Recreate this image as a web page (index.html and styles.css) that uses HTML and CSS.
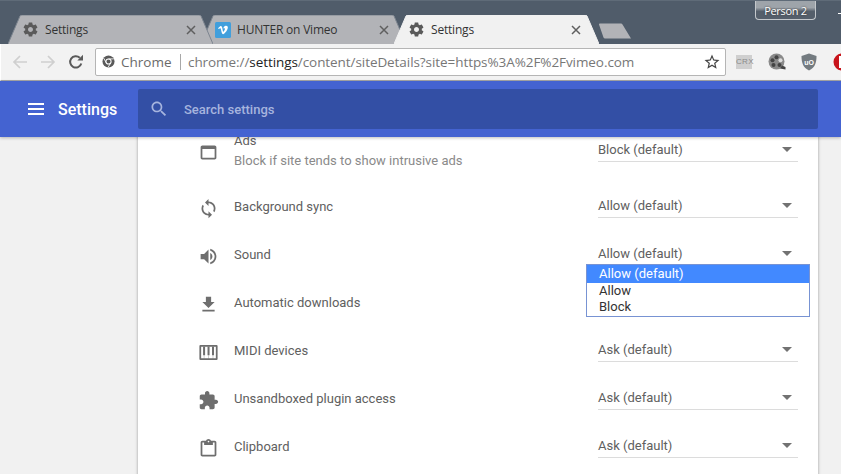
FILE: index.html
```html
<!DOCTYPE html>
<html lang="en">
<head>
<meta charset="utf-8">
<title>Settings</title>
<link rel="stylesheet" href="styles.css">
</head>
<body>
<svg class="defs" width="0" height="0" aria-hidden="true">
  <symbol id="i-gear" viewBox="0 0 24 24"><path d="M19.43 12.98c.04-.32.07-.64.07-.98s-.03-.66-.07-.98l2.11-1.65c.19-.15.24-.42.12-.64l-2-3.46c-.12-.22-.39-.3-.61-.22l-2.49 1c-.52-.4-1.08-.73-1.69-.98l-.38-2.65C14.46 2.18 14.25 2 14 2h-4c-.25 0-.46.18-.49.42l-.38 2.65c-.61.25-1.17.59-1.69.98l-2.49-1c-.23-.09-.49 0-.61.22l-2 3.46c-.13.22-.07.49.12.64l2.11 1.65c-.04.32-.07.65-.07.98s.03.66.07.98l-2.11 1.65c-.19.15-.24.42-.12.64l2 3.46c.12.22.39.3.61.22l2.49-1c.52.4 1.08.73 1.69.98l.38 2.65c.03.24.24.42.49.42h4c.25 0 .46-.18.49-.42l.38-2.65c.61-.25 1.17-.59 1.69-.98l2.49 1c.23.09.49 0 .61-.22l2-3.46c.12-.22.07-.49-.12-.64l-2.11-1.65zM12 15.5c-1.93 0-3.5-1.57-3.5-3.5s1.57-3.5 3.5-3.5 3.5 1.57 3.5 3.5-1.57 3.5-3.5 3.5z"/></symbol>
  <symbol id="i-close" viewBox="0 0 10 10"><path d="M1 1l8 8M9 1l-8 8" fill="none" stroke="currentColor" stroke-width="1.5"/></symbol>
  <symbol id="i-ads" viewBox="0 0 24 24"><path d="M19 4H5c-1.11 0-2 .9-2 2v12c0 1.1.89 2 2 2h14c1.1 0 2-.9 2-2V6c0-1.1-.89-2-2-2zm0 14H5V8h14v10z"/></symbol>
  <symbol id="i-sync" viewBox="0 0 24 24"><path d="M12 4V1L8 5l4 4V6c3.31 0 6 2.69 6 6 0 1.01-.25 1.97-.7 2.8l1.46 1.46C19.54 15.03 20 13.57 20 12c0-4.42-3.58-8-8-8zm0 14c-3.31 0-6-2.69-6-6 0-1.01.25-1.97.7-2.8L5.24 7.74C4.46 8.97 4 10.43 4 12c0 4.42 3.58 8 8 8v3l4-4-4-4v3z"/></symbol>
  <symbol id="i-sound" viewBox="0 0 24 24"><path d="M3 9v6h4l5 5V4L7 9H3zm13.5 3c0-1.77-1.02-3.29-2.5-4.03v8.05c1.48-.73 2.5-2.25 2.5-4.02zM14 3.23v2.06c2.89.86 5 3.54 5 6.71s-2.11 5.85-5 6.71v2.06c4.01-.91 7-4.49 7-8.77s-2.99-7.86-7-8.77z"/></symbol>
  <symbol id="i-download" viewBox="0 0 24 24"><path d="M19 9h-4V3H9v6H5l7 7 7-7zM5 18v2h14v-2H5z"/></symbol>
  <symbol id="i-midi" viewBox="0 0 24 24"><path d="M2.800 3.400h18.400a1.200 1.200 0 0 1 1.200 1.200v14.800a1.200 1.200 0 0 1-1.200 1.200H2.800a1.200 1.200 0 0 1-1.200-1.200V4.600a1.200 1.200 0 0 1 1.200-1.200zm.8 2v13.200h16.800V5.400z" fill-rule="evenodd"/><path d="M5.800 5h2.300v10H5.800zM10.900 5h2.300v10h-2.300zM16 5h2.300v10H16z"/><path d="M6.600 15h.7v4h-.7zM11.700 15h.7v4h-.7zM16.800 15h.7v4h-.7z" opacity=".5"/></symbol>
  <symbol id="i-plugin" viewBox="0 0 24 24"><path d="M20.5 11H19V7c0-1.1-.9-2-2-2h-4V3.500C13 2.120 11.880 1 10.500 1S8 2.120 8 3.500V5H4c-1.100 0-1.990.9-1.990 2v3.800H3.500c1.490 0 2.700 1.210 2.700 2.700s-1.210 2.700-2.700 2.700H2V20c0 1.100.9 2 2 2h3.800v-1.500c0-1.490 1.210-2.700 2.700-2.700 1.490 0 2.700 1.210 2.700 2.700V22H17c1.100 0 2-.9 2-2v-4h1.500c1.380 0 2.500-1.120 2.500-2.500S21.880 11 20.500 11z"/></symbol>
  <symbol id="i-clip" viewBox="0 0 24 24"><path d="M19 3h-4.180C14.400 1.840 13.300 1 12 1c-1.300 0-2.400.84-2.820 2H5c-1.100 0-2 .9-2 2v14c0 1.100.9 2 2 2h14c1.100 0 2-.9 2-2V5c0-1.100-.9-2-2-2zm-7 0c.55 0 1 .45 1 1s-.45 1-1 1-1-.45-1-1 .45-1 1-1zm7 16H5V5h2v3h10V5h2v14z"/></symbol>
</svg>

<div class="strip">
  <div class="tabs">
    <div class="tab tab-a">
      <svg class="tab-shape" viewBox="0 0 205 29" preserveAspectRatio="none"><path d="M0 29L12 1Q12.500 0 14 0H191Q192.500 0 193 1L205 29"/></svg>
      <svg class="fav fav-gear"><use href="#i-gear"/></svg>
      <span class="tab-title">Settings</span>
      <svg class="tab-x"><use href="#i-close"/></svg>
    </div>
    <div class="tab tab-b">
      <svg class="tab-shape" viewBox="0 0 205 29" preserveAspectRatio="none"><path d="M0 29L12 1Q12.500 0 14 0H191Q192.500 0 193 1L205 29"/></svg>
      <svg class="fav" viewBox="0 0 16 16"><rect width="16" height="16" rx="1.500" fill="#419fdc"/><path d="M3 6.200l.8.9c.9-.7 1.400-1 1.700-.8.5.2.9 3.900 1.600 5.200.5.900 1.300.9 2 .3 1.500-1.200 3.400-3.600 3.700-5.700.2-1.700-.8-2.500-2-2.300-1.100.2-2.100 1-2.500 2.700 1.200-.6 1.900-.3 1.500 1-.3 1-1.200 2.300-1.500 2.300-.5 0-.7-3.300-1.300-4.800-.4-1-1.100-1.200-1.800-.8-.8.500-1.400 1.200-2.200 2z" fill="#fff"/></svg>
      <span class="tab-title">HUNTER on Vimeo</span>
      <svg class="tab-x"><use href="#i-close"/></svg>
    </div>
    <div class="tab tab-c">
      <svg class="tab-shape" viewBox="0 0 205 29" preserveAspectRatio="none"><path d="M0 29L12 1Q12.500 0 14 0H191Q192.500 0 193 1L205 29"/></svg>
      <svg class="fav fav-gear"><use href="#i-gear"/></svg>
      <span class="tab-title">Settings</span>
      <svg class="tab-x"><use href="#i-close"/></svg>
    </div>
  </div>
  <svg class="newtab" viewBox="0 0 34 16"><path d="M1 1.500Q.8.500 2 .500H23Q24 .500 24.500 1.500L33 15.500H7Q6 15.500 5.500 14.500z"/></svg>
  <div class="person">Person 2</div>
  <div class="minimize"></div>
</div>

<div class="toolbar">
  <svg class="nav nav-off" viewBox="0 0 16 16"><path d="M15 8H2M8 2L2 8l6 6"/></svg>
  <svg class="nav nav-off nav-fwd" viewBox="0 0 16 16"><path d="M1 8h13M8 2l6 6-6 6"/></svg>
  <svg class="nav nav-reload" viewBox="0 0 16 16"><path d="M13.300 9.500A5.700 5.700 0 1 1 11.800 3.800"/><path class="nav-tip" d="M9.300 6.400H15V.7z"/></svg>
  <div class="omnibox">
    <svg class="chrome-mark" viewBox="0 0 14 14"><circle cx="7" cy="7" r="6.500" fill="#5a5a5a"/><circle cx="7" cy="7" r="2.800" fill="#5a5a5a" stroke="#fff" stroke-width="1.100"/><path d="M7 4.200H12.600M4.600 8.400L1.900 3.500M9.400 8.400L6.600 13.200" stroke="#fff" stroke-width=".9"/></svg>
    <span class="omni-name">Chrome</span>
    <span class="omni-sep"></span>
    <span class="omni-url">chrome://<b>settings</b>/content/siteDetails?site=https%3A%2F%2Fvimeo.com</span>
    <svg class="star" viewBox="0 0 24 24"><path d="M22 9.240l-7.190-.62L12 2 9.190 8.630 2 9.240l5.460 4.730L5.820 21 12 17.270 18.180 21l-1.630-7.030L22 9.240zM12 15.400l-3.760 2.270 1-4.280-3.320-2.880 4.380-.38L12 6.100l1.710 4.040 4.380.38-3.320 2.880 1 4.280L12 15.400z"/></svg>
  </div>
  <div class="ext ext-crx">CRX</div>
  <svg class="ext-icon" viewBox="0 0 18 18"><circle cx="8.500" cy="8.500" r="8" fill="#8a8a8a"/><circle cx="8.500" cy="4.300" r="2" fill="#444"/><circle cx="4.500" cy="7.300" r="2" fill="#444"/><circle cx="12.500" cy="7.300" r="2" fill="#ddd"/><circle cx="5.500" cy="12" r="2" fill="#444"/><circle cx="11.500" cy="12" r="2" fill="#444"/><path d="M12 15.500L17.500 16.500V14L14 12.500z" fill="#444"/></svg>
  <svg class="ext-icon ext-shield" viewBox="0 0 16 18"><path d="M8 .5L15.500 3c0 7 -1.500 11.500-7.500 14.500C2 14.500.5 10 .5 3z" fill="#747b80"/><text x="8" y="11.500" class="shield-text">uO</text></svg>
  <svg class="ext-icon ext-red" viewBox="0 0 18 18"><circle cx="9" cy="9" r="8.500" fill="#c8141b"/><rect x="6" y="3" width="5" height="12" fill="#fff"/><rect x="8" y="5" width="1.200" height="8" fill="#777"/></svg>
</div>

<header class="appbar">
  <div class="brand">
    <svg class="menu" viewBox="0 0 16 12"><path d="M0 0h16v2H0zM0 5h16v2H0zM0 10h16v2H0z"/></svg>
    <span class="brand-name">Settings</span>
  </div>
  <div class="search">
    <svg class="search-icon" viewBox="0 0 24 24"><path d="M15.500 14h-.79l-.28-.27C15.410 12.590 16 11.110 16 9.500 16 5.910 13.090 3 9.500 3S3 5.910 3 9.500 5.910 16 9.500 16c1.610 0 3.090-.59 4.230-1.570l.27.28v.79l5 4.990L20.490 19l-4.990-5zm-6 0C7.010 14 5 11.990 5 9.500S7.010 5 9.500 5 14 7.010 14 9.500 11.990 14 9.500 14z"/></svg>
    <span class="search-text">Search settings</span>
  </div>
</header>

<main class="page">
  <section class="card">
    <div class="row row-tall">
      <svg class="row-icon"><use href="#i-ads"/></svg>
      <div class="label"><div>Ads</div><div class="sub">Block if site tends to show intrusive ads</div></div>
      <div class="select"><span>Block (default)</span><i class="caret"></i></div>
    </div>
    <div class="row">
      <svg class="row-icon"><use href="#i-sync"/></svg>
      <div class="label">Background sync</div>
      <div class="select"><span>Allow (default)</span><i class="caret"></i></div>
    </div>
    <div class="row">
      <svg class="row-icon"><use href="#i-sound"/></svg>
      <div class="label">Sound</div>
      <div class="select select-open"><span>Allow (default)</span><i class="caret"></i>
        <ul class="popup">
          <li class="popup-on">Allow (default)</li>
          <li>Allow</li>
          <li>Block</li>
        </ul>
      </div>
    </div>
    <div class="row">
      <svg class="row-icon"><use href="#i-download"/></svg>
      <div class="label">Automatic downloads</div>
    </div>
    <div class="row">
      <svg class="row-icon"><use href="#i-midi"/></svg>
      <div class="label">MIDI devices</div>
      <div class="select"><span>Ask (default)</span><i class="caret"></i></div>
    </div>
    <div class="row">
      <svg class="row-icon"><use href="#i-plugin"/></svg>
      <div class="label">Unsandboxed plugin access</div>
      <div class="select"><span>Ask (default)</span><i class="caret"></i></div>
    </div>
    <div class="row">
      <svg class="row-icon"><use href="#i-clip"/></svg>
      <div class="label">Clipboard</div>
      <div class="select"><span>Ask (default)</span><i class="caret"></i></div>
    </div>
  </section>
</main>
</body>
</html>
```

FILE: styles.css
```css
* { box-sizing: border-box; }
html, body { margin: 0; height: 474px; overflow: hidden; }
body { width: 841px; background: #f1f1f1; font-family: Roboto, sans-serif; display: flex; flex-direction: column; }
.defs { position: absolute; }

/* tab strip */
.strip { height: 44px; flex: none; background: #505c6a; border-top: 1px solid #5f6b78; display: flex; padding-left: 8px; overflow: hidden; }
.tabs { display: flex; margin-top: 14px; height: 29px; }
.tab { position: relative; width: 205px; height: 29px; display: flex; align-items: center; padding: 0 17px 0 14px; }
.tab + .tab { margin-left: -12px; }
.tab-a { z-index: 3; }
.tab-b { z-index: 2; }
.tab-c { z-index: 4; padding-right: 18px; }
.tab-shape { position: absolute; left: 0; top: 0; width: 100%; height: 100%; fill: #b2b3b7; stroke: #7d8590; stroke-width: 1; }
.tab-c .tab-shape { fill: #f1f1f1; stroke: #f1f1f1; }
.fav { position: relative; width: 16px; height: 16px; flex: none; fill: #5a5a5a; }
.fav-gear { width: 17px; height: 17px; }
.tab-title { position: relative; flex: 1; margin-left: 6px; font: 12px "Open Sans", sans-serif; color: #333; white-space: nowrap; letter-spacing: -.2px; }
.tab-x { position: relative; width: 10px; height: 10px; flex: none; color: #5f5f5f; }
.newtab { width: 34px; height: 16px; margin: 22px 0 0 -1px; fill: #b2b3b7; flex: none; }
.person { width: 61px; height: 20px; margin: -1px 0 0 123px; flex: none; border: 1px solid #c4c8cc; border-top: 0; border-radius: 0 0 4px 4px; background: linear-gradient(#9ea4aa 0 40%, #555f6b 60%); color: #fff; font: 11px/21px "Open Sans", sans-serif; letter-spacing: -.3px; text-align: center; text-shadow: 0 0 2px #333; }
.minimize { width: 6px; height: 1px; margin: 12px 0 0 22px; background: #fff; flex: none; }

/* toolbar */
.toolbar { height: 37px; flex: none; background: #f2f2f2; border-bottom: 1px solid #a8a8a8; border-left: 1px solid #fff; display: flex; align-items: center; overflow: hidden; padding-bottom: 1px; }
.nav { width: 16px; height: 16px; flex: none; fill: none; stroke-width: 1.700; margin-left: 11px; }
.nav-off { stroke: #cfcfcf; }
.nav-fwd { margin-left: 12px; }
.nav-reload { stroke: #5a5a5a; stroke-width: 2; margin-left: 12px; }
.nav-tip { fill: #5a5a5a; stroke: none; }
.omnibox { width: 631px; height: 28px; margin-left: 11px; flex: none; background: #fff; border: 1px solid #b5b5b5; border-radius: 2px; display: flex; align-items: center; padding-left: 6px; font: 13.500px "Open Sans", sans-serif; color: #6a6a6a; white-space: nowrap; }
.chrome-mark { width: 13px; height: 13px; flex: none; }
.omni-name { margin-left: 6px; width: 59px; flex: none; }
.omni-sep { width: 1px; height: 16px; background: #a8a8a8; flex: none; }
.omni-url { margin-left: 7px; flex: 1; color: #777; letter-spacing: -.07px; }
.omni-url b { font-weight: 400; color: #222; }
.star { width: 18px; height: 18px; flex: none; fill: #444; margin-right: 4px; }
.ext { flex: none; }
.ext-crx { width: 16px; height: 14px; margin-left: 10px; background: #cfcfcf; color: #8a8a8a; font: 8px/14px "Liberation Sans", sans-serif; text-align: center; letter-spacing: .3px; }
.ext-icon { width: 18px; height: 18px; flex: none; margin-left: 16px; }
.ext-shield { width: 16px; margin-left: 15px; }
.shield-text { font: bold 7px "Liberation Sans", sans-serif; fill: #fff; text-anchor: middle; }
.ext-red { margin-left: 16px; }

/* app bar */
.appbar { height: 56px; flex: none; position: relative; z-index: 2; background: #4463d1; display: flex; align-items: center; box-shadow: 0 1px 3px rgba(0,0,0,.25); }
.brand { width: 138px; flex: none; display: flex; align-items: center; padding-left: 28px; color: #fff; }
.menu { width: 16px; height: 12px; fill: #fff; flex: none; }
.brand-name { margin-left: 14px; font-size: 16px; font-weight: 500; }
.search { width: 680px; height: 40px; background: #334fa5; border-radius: 2px; display: flex; align-items: center; padding-left: 11px; }
.search-icon { width: 20px; height: 20px; fill: #a6b4de; flex: none; }
.search-text { margin-left: 15px; font-size: 13px; font-weight: 500; color: #a6b4de; }

/* page */
.page { flex: 1; min-height: 0; overflow: hidden; padding-left: 138px; }
.card { width: 680px; height: 420px; margin-top: -17px; background: #fff; box-shadow: 0 0 3px rgba(0,0,0,.35); padding-left: 58px; }
.row { height: 48px; display: flex; align-items: center; color: #606060; font-size: 13px; }
.row-tall { height: 64px; }
.row-icon { width: 21px; height: 21px; margin: 0 1px 0 2px; fill: #6e6e6e; flex: none; }
.label { width: 364px; margin: -4px 0 0 14px; flex: none; }
.sub { color: #8a8a8a; margin-top: 5px; }
.select { position: relative; width: 200px; height: 24px; margin-top: -5px; flex: none; border-bottom: 1px solid #dcdcdc; display: flex; align-items: center; justify-content: space-between; padding-right: 6px; }
.select-open { border-bottom-color: #5f86d8; }
.caret { width: 0; height: 0; border: 5px solid transparent; border-top-color: #727272; border-bottom: 0; }
.popup { position: absolute; left: -12px; top: 22px; width: 224px; height: 53px; margin: 0; padding: 0; list-style: none; background: #fff; border: 1px solid #7893d3; color: #333; z-index: 3; font-size: 13px; line-height: 16.500px; }
.popup li { padding-left: 12px; }
.popup .popup-on { height: 18px; line-height: 18px; background: #4289ff; color: #fff; }
```
